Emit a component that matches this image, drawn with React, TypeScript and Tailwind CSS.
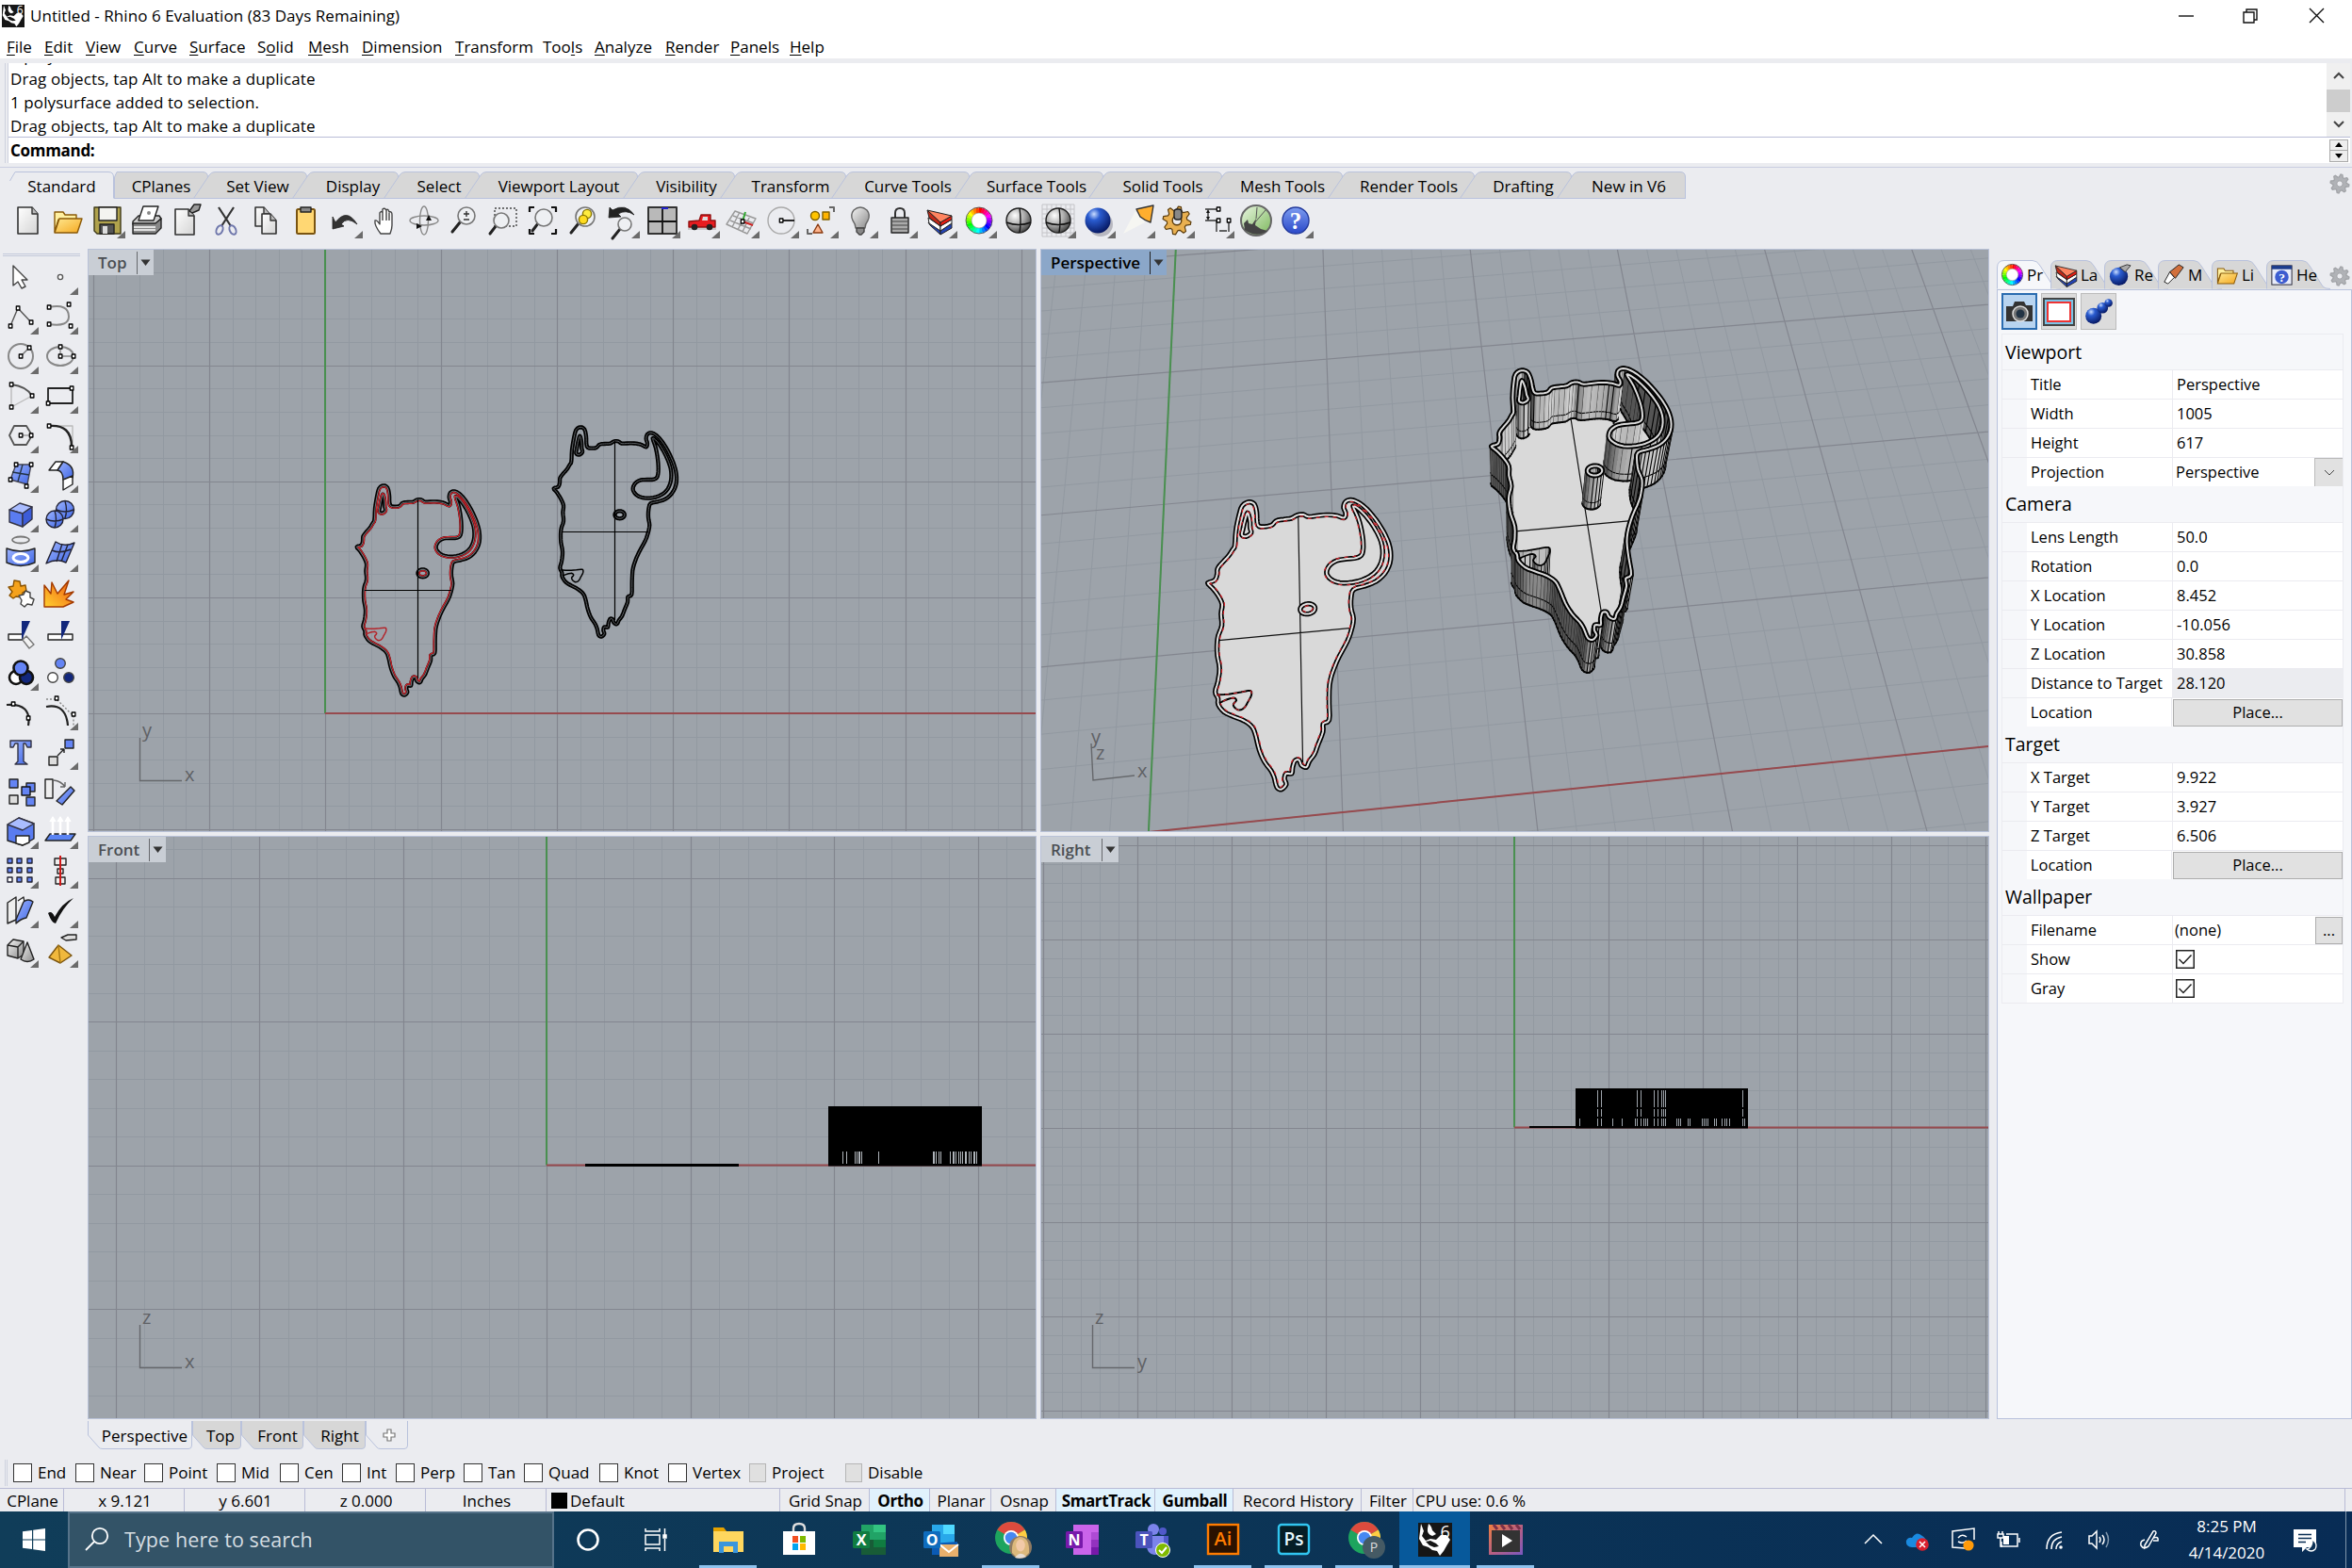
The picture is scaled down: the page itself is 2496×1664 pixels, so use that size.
import React from "react";

/* ------------------------------------------------------------------ */
/* Model geometry                                                      */
/* ------------------------------------------------------------------ */

type P2 = [number, number];
type P3 = [number, number, number];

const OUTLINE: P2[] = [
  [799, 182], [801, 145], [807, 108], [814, 82], [828, 73], [841, 80], [846, 102], [847, 125], [851, 138], [866, 140],
  [879, 138], [889, 128], [905, 126], [922, 125], [935, 118], [948, 118], [960, 125], [985, 124], [1005, 125], [1022, 129],
  [1037, 136], [1041, 125], [1037, 110], [1040, 97], [1049, 91], [1062, 94], [1080, 109], [1100, 137], [1117, 170], [1129, 202],
  [1134, 232], [1131, 260], [1119, 284], [1100, 301], [1075, 310], [1051, 316], [1045, 335], [1044, 360], [1048, 385], [1043, 410],
  [1034, 435], [1015, 470], [1002, 500], [994, 530], [992, 570], [991, 606], [979, 613], [978, 630], [968, 655], [960, 675],
  [950, 688], [944, 700], [934, 695], [930, 684], [922, 684], [917, 697], [915, 710], [904, 709], [901, 720], [904, 731],
  [895, 740], [886, 735], [881, 715], [875, 700], [862, 680], [852, 655], [845, 625], [838, 605], [822, 590], [800, 578],
  [782, 567], [770, 550], [769, 536], [763, 521], [768, 500], [771, 470], [766, 440], [765, 415], [767, 395], [774, 372],
  [772, 345], [774, 322], [765, 300], [752, 280], [743, 268], [757, 263], [762, 250], [763, 235], [772, 222], [785, 207], [794, 192],
];
const HORN: P2[] = [
  [1058, 108], [1068, 140], [1074, 175], [1076, 205], [1073, 230], [1062, 239], [1040, 240], [1018, 242], [1002, 252], [995, 268],
  [1000, 282], [1015, 294], [1040, 299], [1070, 295], [1095, 282], [1110, 262], [1117, 235], [1115, 205], [1105, 175], [1090, 145], [1073, 120],
];
const EAR: P2[] = [[826, 101], [831, 120], [832, 140], [834, 153], [823, 161], [814, 156], [816, 143], [820, 122]];
const MOUTH: P2[] = [[766, 528], [790, 529], [815, 527], [834, 526], [836, 536], [829, 550], [822, 562], [812, 566], [803, 560], [800, 552], [806, 544], [800, 538], [785, 541], [772, 546]];
const EYE: P2[] = Array.from({ length: 14 }, (_, i) => {
  const a = (i / 14) * Math.PI * 2;
  return [953 + 15.5 * Math.cos(a), 352 + 12 * Math.sin(a)] as P2;
});

function smooth(pts: P2[], n: number, closed = true): P2[] {
  const out: P2[] = [];
  const L = pts.length;
  const at = (i: number) => (closed ? pts[(i + L) % L] : pts[Math.max(0, Math.min(L - 1, i))]);
  for (let i = 0; i < (closed ? L : L - 1); i++) {
    const [a, b, c, d] = [at(i - 1), at(i), at(i + 1), at(i + 2)];
    for (let k = 0; k < n; k++) {
      const t = k / n;
      const f = (j: 0 | 1) =>
        0.5 * (2 * b[j] + (c[j] - a[j]) * t + (2 * a[j] - 5 * b[j] + 4 * c[j] - d[j]) * t * t + (3 * b[j] - a[j] - 3 * c[j] + d[j]) * t * t * t);
      out.push([f(0), f(1)]);
    }
  }
  if (!closed) out.push(pts[L - 1]);
  return out;
}

const UNIT = 24.62;
const toWorld = (p: P2): P2 => [(340 + p[0] / 3 - 345) / UNIT, (758 - (430 + p[1] / 3)) / UNIT];

function clockwise(pts: P2[]): P2[] {
  let a = 0;
  pts.forEach((p, i) => {
    const q = pts[(i + 1) % pts.length];
    a += p[0] * q[1] - q[0] * p[1];
  });
  return a > 0 ? [...pts].reverse() : pts;
}

function normals(pts: P2[]): P2[] {
  const L = pts.length;
  return pts.map((_, i) => {
    const a = pts[(i - 1 + L) % L];
    const b = pts[(i + 1) % L];
    const l = Math.hypot(b[0] - a[0], b[1] - a[1]) || 1;
    return [-(b[1] - a[1]) / l, (b[0] - a[0]) / l];
  });
}
const offset = (pts: P2[], d: number): P2[] => {
  const n = normals(pts);
  return pts.map((p, i) => [p[0] + n[i][0] * d, p[1] + n[i][1] * d]);
};

const ring = (pts: P2[], n = 3) => clockwise(smooth(pts, n).map(toWorld));
const OUT = ring(OUTLINE);
const HRN = ring(HORN);
const ERR = ring(EAR);
const EYR = ring(EYE, 2);
const MTH = smooth(MOUTH, 3, false).map(toWorld);
const RINGS = [OUT, HRN, ERR, EYR];
const HALF = 0.058;
const SHIFT: P2 = [-627 / 3 / UNIT, -186 / 3 / UNIT];
const shifted = (pts: P2[]): P2[] => pts.map((p) => [p[0] + SHIFT[0], p[1] + SHIFT[1]]);

const CAM: P3 = [8.452, -10.056, 30.858];
const project = (x: number, y: number, z: number): P3 => {
  const v = [x - CAM[0], y - CAM[1], z - CAM[2]];
  const r = v[0] * 0.99452 - v[1] * 0.10456;
  const u = v[0] * 0.09055 + v[1] * 0.86128 + v[2] * 0.5;
  const d = v[0] * 0.05228 + v[1] * 0.49727 - v[2] * 0.86603;
  return [502.5 + (1285.4 * r) / d, 308.5 - (1285.4 * u) / d, d];
};
const pt = (p: number[]) => p[0].toFixed(1) + " " + p[1].toFixed(1);
const path3 = (pts: P2[], z: number, close = true) => "M" + pts.map((p) => pt(project(p[0], p[1], z))).join("L") + (close ? "Z" : "");
const pathTop = (pts: P2[], close = true) => "M" + pts.map((p) => pt([251 + p[0] * UNIT, 492 - p[1] * UNIT])).join("L") + (close ? "Z" : "");

/* ------------------------------------------------------------------ */
/* Viewports                                                           */
/* ------------------------------------------------------------------ */

const MINOR = "#9299a1";
const MAJOR = "#83868f";
const RED = "#974a4e";
const GREEN = "#4a9050";

function Ortho({ ox, oy, step, children }: { ox: number; oy: number; step: number; children?: React.ReactNode }) {
  const minor: string[] = [];
  const major: string[] = [];
  for (let i = -60; i <= 60; i++) {
    const x = ox + i * step;
    const y = oy + i * step;
    const target = i % 5 === 0 ? major : minor;
    if (x >= 0 && x <= 1005) target.push(`M${Math.round(x) + 0.5} 0V617`);
    if (y >= 0 && y <= 617) target.push(`M0 ${Math.round(y) + 0.5}H1005`);
  }
  return (
    <svg className="block" width="1005" height="617" viewBox="0 0 1005 617">
      <path d={minor.join("")} stroke={MINOR} strokeWidth="1" />
      <path d={major.join("")} stroke={MAJOR} strokeWidth="1.2" />
      <path d={`M${ox} 0V${oy}`} stroke={GREEN} strokeWidth="2" />
      <path d={`M${ox} ${oy}H1005`} stroke={RED} strokeWidth="2" />
      {children}
    </svg>
  );
}

function Axes({ x, y, h, v }: { x: number; y: number; h: string; v: string }) {
  return (
    <g className="font-['Open_Sans',sans-serif]" fill="#5f6165" fontSize="20">
      <path d={`M${x + 0.5} ${y - 45}V${y + 0.5}H${x + 45}`} fill="none" stroke="#66686c" strokeWidth="1.4" />
      <text x={x + 3} y={y - 46}>{v}</text>
      <text x={x + 48} y={y + 1}>{h}</text>
    </g>
  );
}

function ViewLabel({ name, active, width }: { name: string; active?: boolean; width: number }) {
  return (
    <div className={`absolute left-0 top-0 flex h-[27px] items-center justify-between pl-[10px] text-[17px] ${active ? "bg-[#8ba7c9] text-black" : "bg-[#c9ced5] text-[#4b4e53]"}`} style={{ width }}>
      <span className="font-semibold leading-none">{name}</span>
      <div className="flex items-center">
        <span className={`h-[24px] w-px ${active ? "bg-[#222]" : "bg-[#66686c]"}`} />
        <svg className="mx-[3px]" width="11" height="10" viewBox="0 0 11 10">
          <path d="M0.5 1.5H10.5L5.5 8Z" fill="#333" />
        </svg>
      </div>
    </div>
  );
}

function TopView() {
  return (
    <Ortho ox={251} oy={492} step={UNIT}>
      {RINGS.map((r, i) => (
        <g key={i} fill="none" strokeLinejoin="round">
          <path d={pathTop(r)} stroke="#000" strokeWidth="4.3" />
          <path d={pathTop(r)} stroke="#5c6064" strokeWidth="1" />
        </g>
      ))}
      <path d={pathTop(MTH, false)} fill="none" stroke="#000" strokeWidth="1.5" />
      <path d="M558.5 203V393M502 299.5H594" stroke="#000" strokeWidth="1.2" />
      {RINGS.map((r, i) => (
        <g key={i} fill="none" strokeLinejoin="round">
          <path d={pathTop(shifted(r))} stroke="#000" strokeWidth="4.3" />
          <path d={pathTop(shifted(r))} stroke="#6b7074" strokeWidth="1.1" />
          <path d={pathTop(shifted(offset(r, i === 0 || i === 3 ? -HALF : HALF)))} stroke="#d5242c" strokeWidth="1.2" />
        </g>
      ))}
      <path d={pathTop(shifted(MTH), false)} fill="none" stroke="#b3262c" strokeWidth="1.5" />
      <path d="M349.5 265V455M293 361.5H385" stroke="#000" strokeWidth="1.2" />
      <Axes x={54} y={563} h="x" v="y" />
    </Ortho>
  );
}

function BlockView({ right }: { right?: boolean }) {
  if (right) {
    const tall = [23, 27, 65, 69, 83, 87, 91, 93, 95, 177];
    const low = [4, 39, 49, 63, 72, 74, 76, 107, 109, 111, 119, 121, 134, 136, 138, 140, 147, 149, 155, 158, 160, 163, 179];
    return (
      <Ortho ox={502} oy={308.5} step={20}>
        <path d="M518 308H570" stroke="#000" strokeWidth="2" />
        <rect x="567" y="267" width="183" height="42.5" fill="#000" />
        <g stroke="#9da3aa" strokeWidth="1">
          {tall.map((x) => <path key={x} d={`M${567.5 + x} 269V287M${567.5 + x} 289V297M${567.5 + x} 299V307`} />)}
          {low.map((x) => <path key={x} d={`M${567.5 + x} 299V307`} />)}
        </g>
        <Axes x={54} y={563} h="y" v="z" />
      </Ortho>
    );
  }
  const bars = [15, 19, 28, 30, 32, 33, 35, 53, 111, 112, 114, 117, 119, 129, 132, 133, 135, 138, 140, 142, 145, 146, 149, 151, 154, 155, 157];
  return (
    <Ortho ox={486} oy={348.5} step={30.5}>
      <path d="M527 348.5H690" stroke="#000" strokeWidth="3" />
      <rect x="785" y="286" width="163" height="63.5" fill="#000" />
      <g stroke="#aeb3b9" strokeWidth="1">
        {bars.map((x) => <path key={x} d={`M${785.5 + x} 334V347`} />)}
      </g>
      <Axes x={54} y={563} h="x" v="z" />
    </Ortho>
  );
}

type Quad = { d: number; pts: string; rib: string; mid: string; low: string; fill: string };

function wallQuads(pts: P2[], zb: number, sign: number, closed = true, twoSided = false): Quad[] {
  const res: Quad[] = [];
  const L = pts.length;
  for (let i = 0; i < (closed ? L : L - 1); i++) {
    const a = pts[i];
    const b = pts[(i + 1) % L];
    const l = Math.hypot(b[0] - a[0], b[1] - a[1]) || 1;
    let n: P2 = [(-(b[1] - a[1]) / l) * sign, ((b[0] - a[0]) / l) * sign];
    const facing = n[0] * (CAM[0] - a[0]) + n[1] * (CAM[1] - a[1]);
    if (facing <= 0) {
      if (!twoSided) continue;
      n = [-n[0], -n[1]];
    }
    const [a0, b0, a1, b1] = [project(a[0], a[1], zb), project(b[0], b[1], zb), project(a[0], a[1], 2), project(b[0], b[1], 2)];
    const am = project(a[0], a[1], 0.62);
    const bm = project(b[0], b[1], 0.62);
    const s = Math.round(85 + 140 * Math.max(0, n[0] * 0.55 - n[1] * 0.7));
    const outerSide = zb === 0;
    res.push({
      d: Math.hypot((a[0] + b[0]) / 2 - CAM[0], (a[1] + b[1]) / 2 - CAM[1]),
      pts: [a0, b0, b1, a1].map(pt).join(" "),
      rib: outerSide || i % 2 === 0 ? `M${pt(a0)}L${pt(a1)}` : "",
      mid: `M${pt(am)}L${pt(bm)}`,
      low: `M${pt(a0)}L${pt(b0)}`,
      fill: `rgb(${s},${s},${s})`,
    });
  }
  return res;
}

function PerspectiveView() {
  const minor: string[] = [];
  const major: string[] = [];
  for (let i = -25; i <= 50; i++) {
    (i % 5 === 0 ? major : minor).push(`M${pt(project(i, -5, 0))}L${pt(project(i, 35, 0))}`);
    if (i >= -5 && i <= 35) (i % 5 === 0 ? major : minor).push(`M${pt(project(-25, i, 0))}L${pt(project(50, i, 0))}`);
  }
  const quads: Quad[] = [];
  RINGS.forEach((r, i) => {
    quads.push(...wallQuads(offset(r, HALF), i === 0 ? 0 : 0.25, 1));
    quads.push(...wallQuads(offset(r, -HALF), 0.25, -1));
  });
  quads.push(...wallQuads(MTH, 0.25, 1, false, true));
  quads.sort((a, b) => b.d - a.d);
  const o = project(0, 0, 0);
  const seg = (x0: number, y0: number, x1: number, y1: number, z: number) => `M${pt(project(x0, y0, z))}L${pt(project(x1, y1, z))}`;
  const [cx, cy] = toWorld([937, 406]);
  const [, top] = toWorld([937, 120]);
  const [, bot] = toWorld([937, 692]);
  const [lx] = toWorld([768, 406]);
  const [rx] = toWorld([1044, 406]);
  return (
    <svg className="block" width="1005" height="617" viewBox="0 0 1005 617">
      <path d={minor.join("")} stroke={MINOR} strokeWidth="1" />
      <path d={major.join("")} stroke={MAJOR} strokeWidth="1.2" />
      <path d={`M${pt(o)}L${pt(project(0, 35, 0))}`} stroke={GREEN} strokeWidth="2" />
      <path d={`M${pt(o)}L${pt(project(50, 0, 0))}`} stroke={RED} strokeWidth="2" />

      <path d={path3(shifted(offset(OUT, HALF)), 0)} fill="#d9d9d9" />
      <path d={seg(cx + SHIFT[0], top + SHIFT[1], cx + SHIFT[0], bot + SHIFT[1], 0) + seg(lx + SHIFT[0], cy + SHIFT[1], rx + SHIFT[0], cy + SHIFT[1], 0)} stroke="#111" strokeWidth="1.2" />
      {RINGS.map((r, i) => (
        <g key={i} fill="none" strokeLinejoin="round">
          <path d={path3(shifted(r), 0)} stroke="#000" strokeWidth="5.4" />
          <path d={path3(shifted(r), 0)} stroke="#e4e4e4" strokeWidth="2" />
          <path d={path3(shifted(offset(r, i === 0 || i === 3 ? -HALF * 1.1 : HALF * 1.1)), 0)} stroke="#d5242c" strokeWidth="1.2" strokeDasharray="4 5" />
        </g>
      ))}
      <path d={path3(shifted(MTH), 0, false)} fill="none" stroke="#000" strokeWidth="2" />
      <path d={path3(shifted(MTH), 0, false)} fill="none" stroke="#d5242c" strokeWidth="1.1" strokeDasharray="4 5" />

      <path d={path3(OUT, 0.25)} fill="#d9d9d9" />
      <path d={seg(cx, top, cx, bot, 0.25) + seg(lx, cy, rx, cy, 0.25)} stroke="#111" strokeWidth="1.2" />
      {quads.map((q, i) => (
        <g key={i}>
          <polygon points={q.pts} fill={q.fill} stroke={q.fill} strokeWidth="0.6" />
          <path d={q.rib + q.mid} stroke="#000" strokeWidth="1.1" />
          <path d={q.low} stroke="#000" strokeWidth="2" strokeLinecap="round" />
        </g>
      ))}
      {RINGS.map((r, i) => (
        <g key={i} fill="none" strokeLinejoin="round">
          <path d={path3(r, 2)} stroke="#000" strokeWidth="5.8" />
          <path d={path3(r, 2)} stroke="#dcdcdc" strokeWidth="2" />
        </g>
      ))}
      <path d={path3(MTH, 2, false)} fill="none" stroke="#000" strokeWidth="1.8" />

      <g className="font-['Open_Sans',sans-serif]" fill="#5f6165" fontSize="20">
        <path d="M53 524L55 563L99 558" fill="none" stroke="#66686c" strokeWidth="1.4" />
        <text x="53" y="524">y</text>
        <text x="58" y="541">z</text>
        <text x="102" y="560">x</text>
      </g>
    </svg>
  );
}

function Viewport({ name, active, width, children }: { name: string; active?: boolean; width: number; children: React.ReactNode }) {
  return (
    <div className="relative h-[617px] w-[1005px] overflow-hidden bg-[#9da3aa] outline outline-[#b9c2d8]">
      {children}
      <ViewLabel name={name} active={active} width={width} />
    </div>
  );
}

/* ------------------------------------------------------------------ */
/* Tool icons: drawn around (0,0) in a 42 x 42 cell                    */
/* ------------------------------------------------------------------ */

const Node = ({ x, y }: { x: number; y: number }) => <rect x={x - 1.7} y={y - 2} width="3.6" height="4" fill="#fff" stroke="#000" strokeWidth="1.3" />;
const Flag = () => <path d="M19 11V19H10Z" fill="#6b6b6b" />;

function Cell({ flag, children }: { flag?: boolean; children?: React.ReactNode }) {
  return (
    <svg className="block shrink-0" width="42" height="42" viewBox="-21 -21 42 42" fill="none" stroke="#222" strokeWidth="1.4" strokeLinejoin="round">
      {children}
      {flag && <g stroke="none"><Flag /></g>}
    </svg>
  );
}

const Lens = ({ x = 4, y = -5, r = 8, d = 18 }: { x?: number; y?: number; r?: number; d?: number }) => (
  <g>
    <path d={`M${x - r * 0.7} ${y + r * 0.7}L${x - d} ${y + d + 2}`} stroke="#222" strokeWidth="3" strokeLinecap="round" />
    <circle cx={x} cy={y} r={r} fill="#eef0f3" stroke="#777" strokeWidth="1.6" />
  </g>
);
const Page = ({ x, y, w, h }: { x: number; y: number; w: number; h: number }) => (
  <g>
    <path d={`M${x} ${y}H${x + w - 6}L${x + w} ${y + 7}V${y + h}H${x}Z`} fill="url(#paper)" stroke="#333" strokeWidth="1.6" />
    <path d={`M${x + w - 6} ${y}V${y + 7}H${x + w}`} fill="#bbb" stroke="#333" />
  </g>
);
const Wheel = ({ r = 11, w = 6 }: { r?: number; w?: number }) => {
  const n = 24;
  return (
    <g>
      {Array.from({ length: n }, (_, i) => {
        const a = (i / n) * Math.PI * 2 - 1.6;
        const b = ((i + 1.15) / n) * Math.PI * 2 - 1.6;
        return <path key={i} d={`M${Math.cos(a) * r} ${Math.sin(a) * r}L${Math.cos(b) * r} ${Math.sin(b) * r}`} stroke={`hsl(${360 - (i / n) * 360} 100% 50%)`} strokeWidth={w} />;
      })}
      <circle r={r - w / 2} fill="#fff" stroke="#888" strokeWidth="0.6" />
      <circle r={r + w / 2} stroke="#444" strokeWidth="0.8" />
    </g>
  );
};
const Gear = ({ r, fill, stroke, hole }: { r: number; fill: string; stroke: string; hole: string }) => {
  const p = Array.from({ length: 32 }, (_, i) => {
    const a = (i / 32) * Math.PI * 2 + 0.1;
    const q = i % 4 < 2 ? r : r * 0.72;
    return `${(Math.cos(a) * q).toFixed(1)},${(Math.sin(a) * q).toFixed(1)}`;
  });
  return (
    <g>
      <polygon points={p.join(" ")} fill={fill} stroke={stroke} strokeWidth="1.2" />
      <circle r={r * 0.32} fill={hole} stroke={stroke} />
    </g>
  );
};
const Layers = () => (
  <g strokeWidth="1">
    <path d="M-12 2L1 11V15L-10 5Z" fill="#2444b4" />
    <path d="M1 11L13 3V8L1 15Z" fill="#2444b4" />
    <path d="M-12 -3L1 6V11L-11 3Z" fill="#fff" />
    <path d="M1 6L13 -1V3L1 11Z" fill="#fff" />
    <path d="M-13 -11L1 2V6L-11 -3Z" fill="#c22818" />
    <path d="M1 2L13 -5V-1L1 6Z" fill="#e81c10" />
    <path d="M-13 -11L13 -5L1 2Z" fill="#ff8460" />
  </g>
);
const Folder = ({ s = 1 }: { s?: number }) => (
  <g transform={`scale(${s})`} strokeWidth="1.4" stroke="#8a5a08">
    <path d="M-14 -9H-5L-3 -6H9V-1H-10L-14 12Z" fill="#fff0a0" />
    <path d="M-9 -2H15L10 13H-14Z" fill="url(#gold)" />
  </g>
);
const Ball = ({ r = 12 }: { r?: number }) => (
  <g strokeWidth="1.4">
    <circle r={r} fill="url(#steel)" stroke="#222" />
    <path d={`M${-r} 2Q0 7 ${r} 2M1 ${-r}Q3 0 1 ${r}`} stroke="#111" />
  </g>
);
const Help = ({ r = 14 }: { r?: number }) => (
  <g>
    <circle r={r} fill="url(#helpblue)" stroke="#233a9c" />
    <text y="9" textAnchor="middle" fontSize="25" fontWeight="700" fill="#fff" stroke="none" className="font-['Liberation_Serif',serif]">?</text>
  </g>
);

const TOOLBAR: { flag?: boolean; icon: React.ReactNode }[] = [
  { icon: <Page x={-11} y={-14} w={21} h={28} /> },
  { icon: <Folder /> },
  { flag: true, icon: <g><path d="M-14 -14H14V14H-11L-14 11Z" fill="#b0a24c" stroke="#3f3a18" /><rect x="-9" y="-14" width="19" height="14" fill="#f4f4f0" /><rect x="-8" y="4" width="15" height="10" fill="#555" /><rect x="-5" y="6" width="5" height="8" fill="#ddd" stroke="none" /></g> },
  { icon: <g><path d="M-15 1L-9 -5H13L15 -2L9 4H-15Z" fill="#ccc" /><path d="M-9 0L-4 -15H12L7 0Z" fill="#fff" /><circle cx="2" cy="-8" r="2" fill="#888" stroke="none" /><path d="M-15 3H9L15 -2V8L9 14H-15Z" fill="#888" /><path d="M-14 7H9M-14 10H9" stroke="#fff" strokeWidth="1.5" /></g> },
  { icon: <g><Page x={-12} y={-12} w={20} h={27} /><path d="M3 -10L8 -17H15L13 -11L6 -8Z" fill="#999" /></g> },
  { icon: <g strokeWidth="2"><path d="M-8 -14L5 6M8 -14L-5 6" stroke="#333" strokeWidth="2.2" /><ellipse cx="-7" cy="10" rx="3.2" ry="5" stroke="#7078ac" transform="rotate(25 -7 10)" /><ellipse cx="7" cy="10" rx="3.2" ry="5" stroke="#7078ac" transform="rotate(-25 7 10)" /></g> },
  { icon: <g><Page x={-11} y={-14} w={15} h={20} /><Page x={-4} y={-7} w={15} h={21} /></g> },
  { icon: <g><rect x="-9" y="-12" width="19" height="26" rx="1.5" fill="#ffd773" stroke="#7a5410" strokeWidth="2" /><path d="M-5 -14H6V-9H-5Z" fill="#888" /></g> },
  { flag: true, icon: <path d="M-10 2Q2 -14 13 4Q2 -5 -4 4L-1 6L-13 9L-13 -4Z" fill="#333" stroke="#222" strokeWidth="0.8" /> },
  { icon: <path d="M-4 14Q-11 5 -10 0Q-8 -1 -5 4V-8Q-3 -11 -2 -8V-12Q0 -14 2 -11V-11Q4 -13 5 -9Q8 -10 8 -6V5Q8 9 6 14Z M-2 -8V0M2 -11V0M5 -8V0" fill="#fff" stroke="#444" /> },
  { icon: <g stroke="#888"><ellipse rx="15" ry="5" /><ellipse rx="4.5" ry="15" /><path d="M5 -6L8 0H2ZM-8 3L-2 6L-8 9Z" fill="#111" stroke="none" /></g> },
  { icon: <g><Lens x={3} y={-5} r={9} d={15} /><path d="M0 -7H6M3 -10V-4M0 -1H6" stroke="#333" /></g> },
  { icon: <g><rect x="-9" y="-13" width="23" height="19" strokeDasharray="2 2" stroke="#444" /><Lens x={-2} y={0} r={8} d={12} /></g> },
  { icon: <g><Lens x={1} y={-3} r={9} d={12} /><path d="M-14 -9V-14H-9M9 -14H14V-9M14 9V14H9M-14 9V14H-9" stroke="#111" strokeWidth="2.2" /></g> },
  { icon: <g><Lens x={3} y={-4} r={10} d={15} /><circle cx="5" cy="-7" r="4.6" fill="#ffec40" stroke="#8a7600" /><circle cx="1" cy="-1" r="4.6" fill="#ffdc20" stroke="#8a7600" /></g> },
  { flag: true, icon: <g><Lens x={3} y={4} r={7} d={13} /><path d="M-10 -11Q4 -19 13 -6Q4 -12 -4 -7L-1 -4L-14 -3L-13 -14Z" fill="#222" strokeWidth="0.8" /></g> },
  { flag: true, icon: <g><rect x="-15" y="-14" width="30" height="28" fill="#b9b9b9" stroke="#333" strokeWidth="2" /><path d="M0 -14V14M-15 1H15" stroke="#111" strokeWidth="1.8" /><path d="M-1 -13H6" stroke="#22c" strokeWidth="2" /></g> },
  { flag: true, icon: <g><path d="M-15 9H15" stroke="#bbb" /><path d="M-14 1L-3 0L-1 -6H9V0H14V7H-14Z" fill="#e81c20" stroke="#901010" /><path d="M1 -4H6V0H0Z" fill="#ddd" stroke="none" /><circle cx="-8" cy="7" r="2.6" fill="#222" /><circle cx="8" cy="7" r="2.6" fill="#222" /></g> },
  { flag: true, icon: <g stroke="#999"><path d="M-7 -10L15 -2L6 14L-16 4ZM-2 -9L-10 7M4 -7L-4 10M9 -5L1 12M-9 -5L13 3M-12 0L10 9" /><path d="M1 1L4 -9" stroke="#3a3" strokeWidth="2" /><path d="M1 1L12 5" stroke="#c22" strokeWidth="2" /><Node x={1} y={1} /></g> },
  { flag: true, icon: <g><circle r="14" stroke="#aaa" /><path d="M0 0H14" stroke="#111" strokeWidth="1.8" /><Node x={0} y={0} /></g> },
  { flag: true, icon: <g><circle cx="-6" cy="-5" r="4.5" fill="#ffc400" stroke="#806000" /><rect x="2" y="-9" width="7" height="8" fill="#ffb400" stroke="#806000" /><path d="M-3 4L2 13H-8Z" fill="#ffb48c" stroke="#8a3a10" /><path d="M9 -14H14V-9M-14 9V14H-9" stroke="#666" strokeWidth="2" /></g> },
  { flag: true, icon: <g><path d="M-5 8Q-5 4 -8 0Q-11 -6 -7 -11Q0 -17 7 -11Q11 -6 8 0Q5 4 5 8Z" fill="url(#paper2)" stroke="#666" /><path d="M-4 8H4V12L1 15H-1L-4 12Z" fill="#888" stroke="#444" /></g> },
  { flag: true, icon: <g><path d="M-5 -2V-8Q-5 -13 0 -13Q5 -13 5 -8V-2" strokeWidth="2" stroke="#333" /><rect x="-9" y="-3" width="18" height="16" fill="#aaa" /><path d="M-8 1H8M-8 5H8M-8 9H8" stroke="#666" /></g> },
  { flag: true, icon: <Layers /> },
  { flag: true, icon: <Wheel /> },
  { icon: <Ball r={13} /> },
  { flag: true, icon: <g><path d="M-17 -17H17V17H-17ZM-17 -12H17M-17 -7H17M-17 -2H17M-17 3H17M-17 8H17M-17 13H17M-12 -17V17M-7 -17V17M-2 -17V17M3 -17V17M8 -17V17M13 -17V17" stroke="#c4c4c8" strokeWidth="1" /><Ball r={13} /></g> },
  { flag: true, icon: <g stroke="none"><circle cx="3" cy="4" r="13" fill="#b8b8c0" /><circle r="13.5" fill="url(#blueball)" /></g> },
  { flag: true, icon: <g><path d="M-15 14L-2 -10L8 2Z" fill="#f6f6f2" stroke="none" /><path d="M-1 -12L17 -16L14 2Q8 0 3 -4Z" fill="#ffae2e" stroke="#333" /></g> },
  { flag: true, icon: <g><Gear r={15} fill="#e9b050" stroke="#5b3c0c" hole="#ebecf0" /><rect x="-3" y="-12" width="8" height="11" rx="3" fill="#888" /></g> },
  { flag: true, icon: <g><path d="M-12 -12H0M-12 0H0V12M13 0V12M-9 -9V-3M3 11H11" stroke="#333" /><path d="M-11 -8L-9 -12L-7 -8ZM-11 -4L-9 0L-7 -4Z" fill="#111" stroke="none" /><Node x={2} y={-12} /><Node x={2} y={0} /><Node x={13} y={0} /></g> },
  { icon: <g><circle r="16" fill="url(#green)" stroke="#666" strokeWidth="2" /><path d="M-12 10L-13 3L-9 -1L-8 3L-4 4L0 -2L-1 5L5 9L12 11Q0 19 -12 10Z" fill="#444" stroke="none" /><path d="M-2 3L10 -11M0 -2L1 -14" stroke="#555" strokeWidth="1" /></g> },
  { flag: true, icon: <Help /> },
];

const BL = "url(#blue)";
const SIDE: [React.ReactNode, boolean][] = [
  [<path d="M-8 -12V9L-3 5L1 12L5 10L1 3H7Z" fill="#fff" stroke="#444" />, false],
  [<circle r="2.6" fill="#fff" stroke="#555" />, true],
  [<g><path d="M-11 10L-3 -9L11 6" stroke="#555" /><Node x={-11} y={10} /><Node x={-3} y={-9} /><Node x={11} y={6} /></g>, true],
  [<g><path d="M-12 -10Q9 -14 9 0Q9 11 -12 8" stroke="#888" strokeWidth="2" /><Node x={-12} y={-10} /><Node x={9} y={-13} /><Node x={-12} y={8} /><Node x={11} y={10} /></g>, true],
  [<g><circle r="13" stroke="#888" strokeWidth="2" /><path d="M0 0L9 -9" stroke="#777" /><Node x={0} y={0} /><Node x={9} y={-9} /></g>, true],
  [<g><ellipse rx="14" ry="10" stroke="#888" strokeWidth="2" /><path d="M0 -10V0H14" stroke="#888" /><Node x={0} y={-10} /><Node x={0} y={0} /><Node x={14} y={0} /></g>, true],
  [<g><path d="M-10 12V-12" stroke="#bbb" /><path d="M-10 12L12 0" stroke="#bbb" /><path d="M-10 -12Q6 -10 12 0" stroke="#555" strokeWidth="1.8" /><Node x={-10} y={-12} /><Node x={12} y={0} /><Node x={-10} y={12} /></g>, true],
  [<g><rect x="-13" y="-8" width="26" height="16" strokeWidth="1.8" /><Node x={12} y={-8} /><Node x={-13} y={8} /></g>, true],
  [<g><path d="M-12 0L-7 -10H6L12 0L6 10H-7Z" stroke="#555" strokeWidth="1.8" /><path d="M0 0H11" stroke="#999" /><Node x={0} y={0} /><Node x={11} y={0} /></g>, true],
  [<g><path d="M-12 -10H13V13" stroke="#bbb" /><path d="M-12 -10Q12 -12 12 12" strokeWidth="2.4" stroke="#222" /><Node x={-12} y={-10} /><Node x={12} y={13} /></g>, true],
  [<g><path d="M-5 -11L11 -11L7 10L-11 5Z" fill={BL} stroke="#445" /><path d="M2 -11L-3 7M-9 -3L9 0" stroke="#234" /><Node x={-5} y={-11} /><Node x={11} y={-11} /><Node x={6} y={12} /><Node x={-11} y={5} /></g>, true],
  [<g><path d="M-12 -5L-5 -14H3L-3 -5Z" fill="#fff" /><path d="M-3 -5L3 -14Q16 -10 13 3L3 5Q3 -4 -3 -5Z" fill={BL} /><path d="M3 5L13 1V10L3 16Z" fill="#fff" /></g>, true],
  [<g stroke="#334"><path d="M-12 -5L-1 -12L12 -8L2 -1Z" fill="#a9bcff" /><path d="M-12 -5L2 -1V13L-12 8Z" fill="#5a7cf0" /><path d="M2 -1L12 -8V5L2 13Z" fill="#3c5cd8" /></g>, true],
  [<g stroke="#223"><circle cx="5" cy="-5" r="9.5" fill={BL} /><circle cx="-6" cy="5" r="9" fill={BL} /><path d="M-15 5Q-6 9 3 5M-6 -4Q-3 5 -6 14M-4 -5Q5 -1 14 -5M5 -14Q8 -5 5 4" /></g>, true],
  [<g><ellipse cy="-15" rx="9" ry="3.5" stroke="#777" strokeWidth="1.8" /><path d="M-15 -6Q0 0 15 -6V9Q0 16 -15 9Z" fill={BL} /><ellipse cy="4" rx="8" ry="4.5" stroke="#fff" strokeWidth="3" /></g>, true],
  [<g stroke="#223"><path d="M-5 -13Q4 -7 15 -12L6 9Q-4 4 -15 10Z" fill={BL} /><path d="M2 -11L-4 8M-9 -4Q0 0 11 -5M8 -10L1 8" /></g>, true],
  [<g><path d="M-13 -7L-8 -8L-7 -14L-1 -13L0 -8L5 -9L6 -3L2 -1L1 4L-5 3L-8 5L-12 2L-9 -2Z" fill="#f5a21c" stroke="#8a5200" /><path d="M-2 2L3 1L5 -3L10 -1L10 4L14 6L12 12L7 11L4 14L0 11L1 7Z" fill="#fff" stroke="#444" /></g>, false],
  [<path d="M-17 14V-9L-10 0L-9 -12L-3 0L9 -14L4 1L14 -2L6 6L14 9L3 14Z" fill="url(#fire)" stroke="#a33a00" />, false],
  [<g><path d="M-13 1H2V7H-13Z" fill="#fff" /><path d="M2 7L6 3L14 12L9 16Z" fill="#f2f2f2" stroke="#777" /><path d="M1 -13H10L1 7Z" fill="#12277c" stroke="none" /></g>, false],
  [<g><path d="M-13 1H13V7H-13Z" fill="#fff" /><path d="M1 -13H10L1 7Z" fill="#12277c" stroke="none" /></g>, false],
  [<g strokeWidth="2.6" stroke="#111"><circle cx="-5" cy="5" r="7" fill="#fff" /><circle cx="6" cy="5" r="7" fill="#12277c" /><circle cy="-5" r="7.5" fill="#6484f4" /></g>, true],
  [<g stroke="#444"><circle cy="-10" r="5.3" fill="#6484f4" /><circle cx="-8" cy="5" r="5.3" fill="#fff" /><circle cx="9" cy="5" r="5.3" fill="#12277c" /></g>, false],
  [<g><path d="M-15 -8Q12 -10 8 14" strokeWidth="2.2" stroke="#222" /><Node x={-8} y={-9} /><Node x={8} y={6} /></g>, false],
  [<g><path d="M-15 -14H-4L14 4V14" stroke="#888" strokeDasharray="2 2" /><path d="M-15 -6Q6 -10 8 14" strokeWidth="2.2" stroke="#222" /><Node x={-4} y={-15} /><Node x={14} y={2} /></g>, true],
  [<path d="M-11 -12H11V-5H7L5 -9H3V10L7 13H-6L-3 10V-9H-6L-8 -5H-11Z" fill={BL} stroke="#334" />, false],
  [<g><rect x="-12" y="5" width="9" height="9" fill="#ddd" /><rect x="5" y="-13" width="9" height="9" fill="#6484f4" /><path d="M-3 4L4 -3M4 -3H0M4 -3V1" /></g>, true],
  [<g><rect x="-12" y="-13" width="9" height="9" fill="#6484f4" /><rect x="-12" y="4" width="9" height="9" fill="#ddd" /><rect x="6" y="-9" width="9" height="9" fill="#6484f4" /><rect x="1" y="-5" width="9" height="9" fill="#6484f4" stroke="#111" /><rect x="6" y="6" width="9" height="9" fill="#6484f4" /></g>, false],
  [<g><rect x="-16" y="-13" width="8" height="20" fill="#eee" /><path d="M-7 -12Q1 -11 5 -5M5 -5V-10M5 -5H0" stroke="#666" /><path d="M-4 10L11 -5L15 -1L2 14Z" fill={BL} /></g>, false],
  [<g><path d="M-14 -7L-2 -14L14 -8V8L2 15L-14 10Z" fill="#5a7cf0" /><path d="M-14 -7L-2 -14L14 -8L2 -1Z" fill="#a9bcff" stroke="#334" /><path d="M-5 5H9V12L2 15L-5 13Z" fill="#fff" /></g>, true],
  [<g><path d="M-16 10L-11 3H16L11 10Z" fill="#5a84f4" /><path d="M-8 4V-12M0 4V-12M8 4V-12" stroke="#fff" strokeWidth="2.6" /><path d="M-11 -10L-8 -15L-5 -10M-3 -10L0 -15L3 -10M5 -10L8 -15L11 -10" fill="#fff" stroke="#fff" /></g>, true],
  [<g fill="#6484f4" stroke="#223"><path d="M-14 -13H-9V-8H-14ZM-4 -13H1V-8H-4ZM7 -13H12V-8H7ZM-14 -3H-9V2H-14ZM-4 -3H1V2H-4ZM7 -3H12V2H7ZM-4 7H1V12H-4ZM7 7H12V12H7Z" /><path d="M-14 7H-9V12H-14Z" fill="#fff" /></g>, true],
  [<g><rect x="-6" y="-13" width="12" height="7" fill="#eee" /><rect x="-3" y="-2" width="6" height="5" fill="#eee" /><rect x="-5" y="7" width="10" height="7" fill="#eee" /><path d="M0 -16V16" stroke="#d01818" strokeWidth="2" /></g>, true],
  [<g><path d="M-14 -8L-5 -14V10L-14 14Z" fill="#eee" /><path d="M-3 -10L3 -14L4 -8" fill="#fff" /><path d="M-5 10L3 -9Q8 -13 13 -9L6 8Q0 9 -5 14Z" fill={BL} /></g>, true],
  [<path d="M-13 3Q-9 0 -6 7Q2 -8 14 -13Q2 -2 -5 14Q-9 14 -13 3Z" fill="#111" stroke="none" />, true],
  [<g><path d="M-14 -5L-8 -11L3 -9V5L-3 9L-14 6Z" fill="url(#paper2)" /><path d="M-14 -5L-3 -3L3 -9M-3 -3V9" /><path d="M7 -8L14 10Q7 15 0 10Z" fill="url(#paper2)" /></g>, true],
  [<g><path d="M-12 8L-2 -5L12 6L0 14Z" fill="#f0b83c" stroke="#7a5410" /><path d="M-2 -5L0 14" stroke="#a67814" /><path d="M1 -13L8 -16H17V-11L6 -10Z" fill="#ddd" /></g>, true],
];

const GradientDefs = () => (
  <svg className="absolute h-0 w-0">
    <defs>
      <linearGradient id="paper" x1="0" y1="0" x2="1" y2="1"><stop offset="0" stopColor="#fff" /><stop offset="1" stopColor="#d4d4d4" /></linearGradient>
      <linearGradient id="paper2" x1="0" y1="0" x2="1" y2="1"><stop offset="0" stopColor="#f4f4f4" /><stop offset="1" stopColor="#8a8a8a" /></linearGradient>
      <linearGradient id="gold" x1="0" y1="0" x2="1" y2="1"><stop offset="0" stopColor="#ffe890" /><stop offset="1" stopColor="#f4a820" /></linearGradient>
      <linearGradient id="blue" x1="0" y1="0" x2="1" y2="1"><stop offset="0" stopColor="#9db4ff" /><stop offset="1" stopColor="#3f66e4" /></linearGradient>
      <linearGradient id="fire" x1="0" y1="1" x2="1" y2="0"><stop offset="0" stopColor="#ffd030" /><stop offset="1" stopColor="#f05a10" /></linearGradient>
      <linearGradient id="helpblue" x1="0" y1="0" x2="0" y2="1"><stop offset="0" stopColor="#7c9cf0" /><stop offset="1" stopColor="#2a48c8" /></linearGradient>
      <linearGradient id="green" x1="0" y1="0" x2="1" y2="1"><stop offset="0" stopColor="#eaf6e2" /><stop offset="1" stopColor="#7cb85c" /></linearGradient>
      <radialGradient id="steel" cx="0.35" cy="0.3" r="0.8"><stop offset="0" stopColor="#fff" /><stop offset="0.5" stopColor="#a8a8a8" /><stop offset="1" stopColor="#333" /></radialGradient>
      <radialGradient id="blueball" cx="0.35" cy="0.25" r="0.8"><stop offset="0" stopColor="#c8dcff" /><stop offset="0.3" stopColor="#2a5cd0" /><stop offset="1" stopColor="#04145c" /></radialGradient>
      <linearGradient id="film" x1="0" y1="0" x2="1" y2="1"><stop offset="0" stopColor="#f08040" /><stop offset="0.5" stopColor="#b86080" /><stop offset="1" stopColor="#7a58c0" /></linearGradient>
    </defs>
  </svg>
);

/* ------------------------------------------------------------------ */
/* Window chrome                                                       */
/* ------------------------------------------------------------------ */

const Rhino = ({ w, h }: { w: number; h: number }) => (
  <svg width={w} height={h} viewBox="0 0 36 36" preserveAspectRatio="none">
    <rect width="36" height="36" fill="#161616" />
    <path d="M3 1L6 9L4 14L8 19L13 17L19 18L24 13L30 13L34 18L31 23L27 30L23 35L20 30L15 29L11 26L5 24L1 17L2 9Z" fill="#fff" />
    <path d="M11 1Q14 3 15 8L19 12L15 14Q9 12 10 6Z" fill="#fff" />
    <path d="M8 20L13 19L19 22L22 25L17 26L12 24Z" fill="#161616" />
    <path d="M6 9L10 15L13 16L8 17L5 14Z" fill="#161616" />
    <text x="23.5" y="15.5" fontSize="18" fill="#fff" className="font-['Open_Sans',sans-serif]">6</text>
  </svg>
);

function TitleBar() {
  return (
    <div className="flex h-[34px] shrink-0 items-center bg-white pl-[2px]">
      <Rhino w={24} h={24} />
      <span className="ml-[6px] text-[17px] tracking-[0.05px]">Untitled - Rhino 6 Evaluation (83 Days Remaining)</span>
      <svg className="ml-auto mr-[28px]" width="156" height="20" viewBox="0 0 156 20" fill="none" stroke="#111" strokeWidth="1.4">
        <path d="M0 10H16" />
        <path d="M69 6H80V17H69ZM72 6V3H83V14H80" />
        <path d="M139 2L154 17M154 2L139 17" />
      </svg>
    </div>
  );
}

const MENU: [string, number][] = [["File", 0], ["Edit", 0], ["View", 0], ["Curve", 0], ["Surface", 0], ["Solid", 1], ["Mesh", 0], ["Dimension", 0], ["Transform", 0], ["Tools", 3], ["Analyze", 0], ["Render", 0], ["Panels", 0], ["Help", 0]];
const MENU_W = ["w-[40px]", "w-[44px]", "w-[51px]", "w-[59px]", "w-[72px]", "w-[54px]", "w-[57px]", "w-[99px]", "w-[93px]", "w-[55px]", "w-[75px]", "w-[69px]", "w-[63px]", "w-[60px]"];

function MenuBar() {
  return (
    <div className="flex h-[28px] shrink-0 items-start bg-white pl-[7px] text-[17px] leading-[31px]">
      {MENU.map(([m, k], i) => (
        <span key={m} className={`shrink-0 whitespace-nowrap ${MENU_W[i]}`}>
          {m.slice(0, k)}
          <span className="underline underline-offset-2">{m[k]}</span>
          {m.slice(k + 1)}
        </span>
      ))}
    </div>
  );
}

function CommandArea() {
  return (
    <div className="flex h-[116px] shrink-0 border-b border-[#c9cde0] pb-[4px] pl-[5px] pr-[2px] pt-[5px]">
      <div className="w-[4px] border-x border-[#cdd1de]" />
      <div className="flex grow flex-col bg-white text-[17px]">
        <div className="flex h-[79px] justify-between border-b border-[#b9bcd6]">
          <div className="-mb-px flex flex-col justify-end overflow-hidden pl-[2px] leading-[25px] tracking-[0.1px]">
            <div>1 polysurface added to selection.</div>
            <div>Drag objects, tap Alt to make a duplicate</div>
            <div>1 polysurface added to selection.</div>
            <div>Drag objects, tap Alt to make a duplicate</div>
          </div>
          <div className="flex w-[25px] flex-col items-center justify-between bg-[#f0f0f0] py-[9px]">
            <svg width="12" height="8" viewBox="0 0 12 8" fill="none" stroke="#444" strokeWidth="2"><path d="M1 7L6 2L11 7" /></svg>
            <div className="mt-[1px] h-[24px] w-full bg-[#cdcdcd]" />
            <svg width="12" height="8" viewBox="0 0 12 8" fill="none" stroke="#444" strokeWidth="2"><path d="M1 1L6 6L11 1" /></svg>
          </div>
        </div>
        <div className="flex grow items-center justify-between pl-[2px] pr-[2px] font-bold">
          <span className="tracking-[-0.3px]">Command:</span>
          <div className="flex h-[24px] w-[20px] flex-col border border-[#aaa] bg-[#eee]">
            <div className="flex h-1/2 items-center justify-center border-b border-[#aaa]"><svg width="8" height="5" viewBox="0 0 8 5"><path d="M0 5L4 0L8 5Z" /></svg></div>
            <div className="flex h-1/2 items-center justify-center"><svg width="8" height="5" viewBox="0 0 8 5"><path d="M0 0L4 5L8 0Z" /></svg></div>
          </div>
        </div>
      </div>
    </div>
  );
}

const TABS: [string, number][] = [
  ["Standard", 111], ["CPlanes", 100], ["Set View", 105], ["Display", 97], ["Select", 86], ["Viewport Layout", 168], ["Visibility", 103], ["Transform", 118],
  ["Curve Tools", 131], ["Surface Tools", 142], ["Solid Tools", 126], ["Mesh Tools", 128], ["Render Tools", 140], ["Drafting", 103], ["New in V6", 121],
];

function ToolTabs() {
  return (
    <div className="flex h-[33px] shrink-0 items-end justify-between pl-[10px] pr-[2px] text-[17px]">
      <div className="flex h-[29px]">
        {TABS.map(([name, w], i) => (
          <div key={name} className={`relative flex h-[29px] shrink-0 items-center justify-center pt-px ${i === 0 ? "z-10" : ""}`} style={{ width: w }}>
            <svg className={`absolute top-0 ${i > 1 ? "-left-[16px]" : "left-0"}`} width={i > 1 ? w + 16 : w} height="29" fill={i === 0 ? "#ebecf0" : "#d7d7d7"} stroke="#b9c2dc">
              <path d={i > 1 ? `M0.5 28.5L17 4Q19 0.5 23 0.5H${w + 10}Q${w + 15.5} 0.5 ${w + 15.5} 6V28.5` : i === 0 ? `M0.5 10L6 0.5H${w - 6}Q${w - 0.5} 0.5 ${w - 0.5} 6V28.5` : `M0.5 28.5V6L3 0.5H${w - 6}Q${w - 0.5} 0.5 ${w - 0.5} 6V28.5`} />
              {i > 0 && <path d={`M0 28.5H${w + 16}`} />}
            </svg>
            <span className="relative whitespace-nowrap leading-none">{name}</span>
          </div>
        ))}
      </div>
      <svg className="mb-[5px]" width="22" height="22" viewBox="-11 -11 22 22"><Gear r={10} fill="#b0b2b6" stroke="#a0a2a6" hole="#ebecf0" /></svg>
    </div>
  );
}

/* ------------------------------------------------------------------ */
/* Properties panel                                                    */
/* ------------------------------------------------------------------ */

const BluePair = () => (
  <g stroke="none"><circle cx="-5" cy="4" r="8" fill="url(#blueball)" /><circle cx="4" cy="-4" r="5.5" fill="url(#blueball)" /><circle cx="10" cy="-9" r="4" fill="url(#blueball)" /></g>
);
const PANEL_TABS: [string, React.ReactNode][] = [
  ["Pr", <Wheel r={9} w={5} />],
  ["La", <g transform="scale(0.9)"><Layers /></g>],
  ["Re", <g stroke="none"><circle cx="-1" cy="2" r="10" fill="url(#blueball)" /><path d="M0 -8L8 -11L12 -10L6 -3Z" fill="#aaa" stroke="#333" /></g>],
  ["M", <g><path d="M-10 8L-4 -3L1 3L-6 10Z" fill="#fff" /><path d="M-4 -3L6 -11L11 -8L2 4Z" fill="#d2703c" /></g>],
  ["Li", <Folder s={0.75} />],
  ["He", <g><rect x="-11" y="-10" width="22" height="21" fill="#e8ecfa" stroke="#223" /><rect x="-11" y="-10" width="22" height="4" fill="#1c3c8c" stroke="none" /><circle cy="2.5" r="7.5" fill="#3c5cd0" stroke="none" /><text y="7.5" textAnchor="middle" fontSize="14" fontWeight="700" fill="#fff" stroke="none" className="font-['Liberation_Serif',serif]">?</text></g>],
];

function PanelTabs() {
  return (
    <div className="flex h-[31px] shrink-0">
      {PANEL_TABS.map(([t, icon], i) => (
        <div key={t} className={`relative flex shrink-0 items-center pl-[3px] text-[17px] ${i === 5 ? "w-[75px]" : i === 4 ? "w-[58px]" : "w-[57px]"}`}>
          <svg className="absolute left-0 top-0" width="76" height="31" viewBox="0 0 76 31" fill={i === 0 ? "#f6f7fa" : "#d7d7d7"} stroke="#b9c2dc">
            <path d="M0.5 30.5V8Q0.5 0.5 8 0.5H38Q43 0.5 46 6L60 28Q62 30.5 68 30.5" />
          </svg>
          <svg className="relative" width="27" height="27" viewBox="-14 -14 28 28" fill="none" stroke="#222" strokeWidth="1">{icon}</svg>
          <span className="relative ml-[2px] leading-none">{t}</span>
        </div>
      ))}
    </div>
  );
}

type Row = [string, React.ReactNode, boolean?];
const Place = () => <div className="flex h-[29px] w-[180px] items-center justify-center border border-[#adadad] bg-[#e1e1e1]">Place...</div>;
const Text = ({ children }: { children: React.ReactNode }) => <span className="pl-[3px]">{children}</span>;
const Check = () => (
  <svg className="ml-[2px]" width="20" height="20" viewBox="0 0 20 20" fill="#fff" stroke="#222" strokeWidth="1.5"><rect x="0.75" y="0.75" width="18.5" height="18.5" /><path d="M3.5 10L8 14.5L16.5 5.5" fill="none" /></svg>
);
const SECTIONS: [string, Row[]][] = [
  ["Viewport", [
    ["Title", <Text>Perspective</Text>], ["Width", <Text>1005</Text>], ["Height", <Text>617</Text>],
    ["Projection", <div className="flex grow items-center justify-between"><span className="pl-[2px]">Perspective</span><span className="flex h-[30px] w-[30px] items-center justify-center border-l border-t border-[#bbb] bg-[#e1e1e1]"><svg width="12" height="8" viewBox="0 0 12 8" fill="none" stroke="#444"><path d="M1 1L6 6L11 1" /></svg></span></div>],
  ]],
  ["Camera", [
    ["Lens Length", <Text>50.0</Text>], ["Rotation", <Text>0.0</Text>], ["X Location", <Text>8.452</Text>], ["Y Location", <Text>-10.056</Text>],
    ["Z Location", <Text>30.858</Text>], ["Distance to Target", <Text>28.120</Text>, true], ["Location", <Place />],
  ]],
  ["Target", [["X Target", <Text>9.922</Text>], ["Y Target", <Text>3.927</Text>], ["Z Target", <Text>6.506</Text>], ["Location", <Place />]]],
  ["Wallpaper", [
    ["Filename", <div className="flex grow items-center justify-between"><span className="pl-[1px]">(none)</span><span className="flex h-[29px] w-[29px] items-center justify-center border border-[#adadad] bg-[#e1e1e1]">...</span></div>],
    ["Show", <Check />], ["Gray", <Check />],
  ]],
];

function PropertiesPanel() {
  return (
    <div className="mt-[17px] flex w-[377px] shrink-0 flex-col">
      <div className="relative">
        <PanelTabs />
        <svg className="absolute right-[2px] top-[6px]" width="22" height="22" viewBox="-11 -11 22 22"><Gear r={10} fill="#b0b2b6" stroke="#a0a2a6" hole="#ebecf0" /></svg>
      </div>
      <div className="flex h-[1230px] flex-col border border-[#b9c2dc] bg-[#f6f7fa] pl-[4px] pt-[3px]">
        <div className="flex gap-[4px]">
          <div className="flex h-[39px] w-[38px] items-center justify-center border-2 border-[#2a6cb0] bg-[#b8d4f0]">
            <svg width="32" height="30" viewBox="-16 -15 32 30"><path d="M-14 -6H-7L-5 -11H5L7 -7H14V10H-14Z" fill="#333" /><circle cx="1" cy="2" r="8" fill="#777" stroke="#ddd" strokeWidth="1.5" /><circle cx="1" cy="2" r="4.5" fill="#234" /></svg>
          </div>
          <div className="flex h-[39px] w-[38px] items-center justify-center border border-[#bbb] bg-[#dcdcdc]">
            <svg width="34" height="34" viewBox="-17 -17 34 34" fill="none"><rect x="-16" y="-14" width="32" height="28" fill="#7cc4e8" stroke="#444" strokeWidth="2" /><rect x="-12" y="-10" width="24" height="20" fill="#fff" stroke="#e33" strokeWidth="2" /></svg>
          </div>
          <div className="flex h-[39px] w-[38px] items-center justify-center border border-[#bbb] bg-[#dcdcdc]">
            <svg width="34" height="34" viewBox="-16 -16 32 32"><BluePair /></svg>
          </div>
        </div>
        <div className="mt-[4px] flex w-[363px] flex-col border-l border-r border-t border-[#ebebf0]">
          {SECTIONS.map(([title, rows], s) => (
            <div key={title} className="flex flex-col">
              <div className={`flex items-center pl-[3px] text-[19.5px] leading-none ${s === 0 ? "h-[37px]" : "h-[38px]"}`}>{title}</div>
              {rows.map(([label, value, dim], i) => (
                <div key={i} className="flex h-[31px] text-[16.5px]">
                  <div className="w-[26px] border-t border-[#ebebf0]" />
                  <div className="flex w-[155px] items-center whitespace-nowrap border-r border-t border-[#ebebf0] bg-white pl-[4px] leading-none">{label}</div>
                  <div className={`flex grow items-center border-t border-[#ebebf0] pl-[1px] leading-none ${dim ? "bg-[#ebecf0]" : "bg-white"}`}>{value}</div>
                </div>
              ))}
            </div>
          ))}
          <div className="h-px bg-[#ebebf0]" />
        </div>
      </div>
    </div>
  );
}

/* ------------------------------------------------------------------ */
/* Bottom bars                                                         */
/* ------------------------------------------------------------------ */

const VIEW_TABS: [string, number, number][] = [["Perspective", 111, 10], ["Top", 52, 8], ["Front", 66, 11], ["Right", 66, 11]];

function ViewTabs() {
  return (
    <div className="flex h-[33px] shrink-0 items-start pl-[93px] pt-[2px] text-[17px]">
      {[...VIEW_TABS, ["+", 45, 5] as [string, number, number]].map(([t, w, pad], i) => (
        <div key={t} className="relative flex h-[30px] items-center justify-center" style={{ width: w, paddingLeft: pad }}>
          <svg className="absolute left-0 top-0" width={w} height="30" fill={i > 0 && i < 4 ? "#d7d7d7" : "#ebecf0"} stroke="#b9c2dc">
            <path d={`M0.5 0V15L12 28Q13 29.5 16 29.5H${w - 4}Q${w - 0.5} 29.5 ${w - 0.5} 26V0`} />
          </svg>
          {t === "+" ? (
            <svg className="relative" width="14" height="14" viewBox="0 0 14 14" fill="#fff" stroke="#777" strokeWidth="1.2"><path d="M5 1H9V5H13V9H9V13H5V9H1V5H5Z" /></svg>
          ) : (
            <span className="relative whitespace-nowrap leading-none">{t}</span>
          )}
        </div>
      ))}
    </div>
  );
}

const SNAPS: [string, number][] = [["End", 66], ["Near", 73], ["Point", 77], ["Mid", 67], ["Cen", 66], ["Int", 57], ["Perp", 72], ["Tan", 64], ["Quad", 80], ["Knot", 73], ["Vertex", 86], ["Project", 102], ["Disable", 100]];

function SnapBar() {
  return (
    <div className="flex h-[40px] shrink-0 items-center pl-[5px] pt-[7px] text-[17px]">
      <div className="mr-[6px] h-[28px] w-[3px] border-x border-[#cdd1de]" />
      {SNAPS.map(([t, w], i) => (
        <div key={t} className="flex shrink-0 items-center gap-[6px]" style={{ width: w }}>
          <div className={`h-[20px] shrink-0 border-[1.5px] ${i > 10 ? "w-[18px] border-[#b5b5b5] bg-[#e0e0e0]" : "w-[20px] border-[#333] bg-white"}`} />
          <span className="leading-none">{t}</span>
        </div>
      ))}
    </div>
  );
}

const STATUS: [string, number][] = [["CPlane", 68], ["x 9.121", 128], ["y 6.601", 128], ["z 0.000", 128], ["Inches", 128], ["Default", 248], ["Grid Snap", 95], ["Ortho", 64], ["Planar", 65], ["Osnap", 69], ["SmartTrack", 105], ["Gumball", 83], ["Record History", 136], ["Filter", 55], ["CPU use: 0.6 %", 989]];

function StatusBar() {
  return (
    <div className="flex h-[25px] shrink-0 border-t border-[#b9bcd6] text-[17px]">
      {STATUS.map(([t, w], i) => {
        const on = t === "Ortho" || t === "SmartTrack" || t === "Gumball";
        const left = t === "Default" || i === 14;
        return (
          <div key={t} className={`flex shrink-0 items-center whitespace-nowrap border-r border-[#b9bcd6] pt-px leading-none ${left ? "pl-[2px]" : "justify-center pl-[2px]"} ${on ? "bg-[#e0f2fd] font-bold tracking-[-0.4px]" : ""}`} style={{ width: w }}>
            {t === "Default" && <span className="ml-[3px] mr-[3px] h-[17px] w-[17px] bg-black" />}
            {t}
          </div>
        );
      })}
    </div>
  );
}

const Chrome = ({ badge }: { badge: React.ReactNode }) => (
  <g stroke="none" transform="translate(2 0)">
    <circle cx="-2" cy="-2" r="17" fill="#1da45e" />
    <path d="M-2 -2L-16.7 -10.5A17 17 0 0 1 12.7 -10.5Z" fill="#dd4b3e" />
    <path d="M-2 -2L12.7 -10.5A17 17 0 0 1 -2 15Z" fill="#ffcd42" />
    <circle cx="-2" cy="-2" r="8" fill="#fff" />
    <circle cx="-2" cy="-2" r="6.3" fill="#4688f1" />
    {badge}
  </g>
);

const APPS: { u?: boolean; hot?: boolean; icon: React.ReactNode }[] = [
  { u: true, icon: <g><path d="M-16 -13H-5L-2 -9V0H-16Z" fill="#e5a200" /><path d="M-16 -9H16V13H-16Z" fill="#ffd75e" /><path d="M-10 14V2H10V14H5V7H-5V14Z" fill="#3a96dd" /></g> },
  { icon: <g><path d="M-6 -8V-12Q-6 -17 0 -17Q6 -17 6 -12V-8" fill="none" stroke="#ddd" strokeWidth="2.4" /><rect x="-17" y="-9" width="34" height="25" fill="#fff" /><path d="M-7 -4H-1V3H-7Z" fill="#f25022" /><path d="M1 -4H7V3H1Z" fill="#7fba00" /><path d="M-7 4H-1V11H-7Z" fill="#00a4ef" /><path d="M1 4H7V11H1Z" fill="#ffb900" /></g> },
  { icon: <g><path d="M-9 -16H4V0H-9Z" fill="#21a366" /><path d="M4 -16H17V-8H4Z" fill="#33c481" /><path d="M4 -8H17V0H4Z" fill="#21a366" /><path d="M-9 0H4V16H-9Z" fill="#185c37" /><path d="M4 0H17V8H4Z" fill="#107c41" /><path d="M4 8H17V16H4Z" fill="#185c37" /><rect x="-18" y="-9" width="18" height="18" rx="1.5" fill="#107c41" /><text x="-9" y="6" textAnchor="middle" fontSize="16" fontWeight="700" fill="#fff">X</text></g> },
  { icon: <g><path d="M-9 -16H15V6H-9Z" fill="#28a8ea" /><path d="M3 -16H15V-6H3Z" fill="#50d9ff" /><path d="M-9 4L18 2V16H-9Z" fill="#0a5ab4" /><path d="M-1 5H19V18H-1Z" fill="#e8b06c" /><path d="M-1 5L9 13L19 5" fill="none" stroke="#fff" strokeWidth="2" /><rect x="-18" y="-9" width="18" height="18" rx="1.5" fill="#0f6cbd" /><text x="-9" y="6" textAnchor="middle" fontSize="16" fontWeight="700" fill="#fff">O</text></g> },
  { u: true, icon: <Chrome badge={<g><circle cx="8" cy="8" r="12" fill="#8f7a62" /><path d="M-1 14Q-2 -2 8 -3Q18 -2 17 14L13 18H3Z" fill="#dcb87c" /><ellipse cx="8" cy="6" rx="4.8" ry="6.5" fill="#f2caa8" /><path d="M2 19Q8 11 14 18Q8 21 2 19Z" fill="#e8ddd4" /></g>} /> },
  { icon: <g><rect x="-9" y="-16" width="27" height="32" fill="#ca64ea" /><path d="M10 -8H18V0H10Z" fill="#ae4bd5" /><path d="M10 0H18V8H10Z" fill="#9332bf" /><path d="M10 8H18V16H10Z" fill="#7719aa" /><rect x="-17" y="-9" width="18" height="18" rx="1.5" fill="#7719aa" /><text x="-8" y="6" textAnchor="middle" fontSize="16" fontWeight="700" fill="#fff">N</text></g> },
  { icon: <g><circle cx="1" cy="-11" r="6" fill="#7b83eb" /><circle cx="11" cy="-9" r="4" fill="#5059c9" /><path d="M6 -4H17V6Q16 12 10 12Z" fill="#5059c9" /><path d="M-6 -4H12V6Q11 16 2 16Q-6 15 -6 6Z" fill="#7b83eb" /><rect x="-18" y="-9" width="18" height="18" rx="1.5" fill="#4b53bc" /><text x="-9" y="6" textAnchor="middle" fontSize="16" fontWeight="700" fill="#fff">T</text><circle cx="11" cy="11" r="7.5" fill="#7fba00" stroke="#fff" /><path d="M7 11L10 14L15 8" fill="none" stroke="#fff" strokeWidth="2" /></g> },
  { u: true, icon: <g><rect x="-16" y="-16" width="32" height="31" fill="#2a1200" stroke="#ff7c00" strokeWidth="2.4" /><text y="6" textAnchor="middle" fontSize="20" fontWeight="600" fill="#ff7c00">Ai</text></g> },
  { u: true, icon: <g><rect x="-16" y="-16" width="32" height="31" rx="3" fill="#051e26" stroke="#31c5f0" strokeWidth="2.4" /><text y="6" textAnchor="middle" fontSize="19" fontWeight="600" fill="#e8faff">Ps</text></g> },
  { u: true, icon: <Chrome badge={<g><circle cx="8" cy="8" r="12" fill="#455a64" /><text x="8" y="13" textAnchor="middle" fontSize="14" fill="#ddd">P</text></g>} /> },
  { u: true, hot: true, icon: <g transform="translate(-18 -18)"><Rhino w={36} h={36} /></g> },
  { u: true, icon: <g><rect x="-18" y="-16" width="36" height="32" fill="url(#film)" /><path d="M-15 -10H15V13H-15Z" fill="#333" /><path d="M-13 -16L-9 -11M-5 -16L-1 -11M3 -16L7 -11M11 -16L15 -11" stroke="#7a3048" strokeWidth="3" /><path d="M-4 -6L7 1L-4 8Z" fill="#fff" /></g> },
];

function Taskbar() {
  return (
    <div className="flex h-[60px] shrink-0 items-stretch bg-linear-to-r from-[#103d59] via-[#0c3556] to-[#082c55] text-white">
      <div className="flex w-[72px] items-center justify-center">
        <svg width="24" height="24" viewBox="0 0 24 24" fill="#fff"><path d="M0 3.3L10 2V11.4H0ZM11.2 1.8L24 0V11.4H11.2ZM0 12.6H10V22L0 20.7ZM11.2 12.6H24V24L11.2 22.2Z" /></svg>
      </div>
      <div className="flex w-[516px] items-center border-2 border-[#56738a] bg-[#335367] pl-[15px]">
        <svg width="28" height="28" viewBox="0 0 28 28" fill="none" stroke="#fff" strokeWidth="1.8"><circle cx="17" cy="10" r="8.2" /><path d="M11 16L2 25" /></svg>
        <span className="ml-[15px] text-[21.5px] leading-none tracking-[0.1px] text-[#d5dde2]">Type here to search</span>
      </div>
      <div className="flex w-[72px] items-center justify-center"><svg width="26" height="26" viewBox="0 0 26 26"><circle cx="13" cy="13" r="10.5" fill="none" stroke="#fff" strokeWidth="2.6" /></svg></div>
      <div className="flex w-[75px] items-center justify-center">
        <svg className="-ml-[3px]" width="26" height="26" viewBox="0 0 26 26" fill="none" stroke="#fff" strokeWidth="1.5"><path d="M2 1V4H17V1M2 8H17V18H2ZM2 25V22H17V25M22.5 1V8M22.5 12V25" /><path d="M21 8H24V11H21Z" fill="#fff" /></svg>
      </div>
      {APPS.map((a, i) => (
        <div key={i} className={`flex w-[75px] flex-col items-center justify-between ${a.hot ? "bg-[#07599b]" : ""}`}>
          <svg className="mt-[8px] font-['Open_Sans',sans-serif]" width="44" height="44" viewBox="-22 -22 44 44">{a.icon}</svg>
          <div className={`h-[3px] ${a.u ? "bg-[#8ec2ee]" : ""} ${a.hot ? "w-full" : "w-[61px]"}`} />
        </div>
      ))}
      <div className="ml-auto flex items-center">
        <svg width="340" height="40" viewBox="1970 1614 340 40" fill="none" stroke="#fff" strokeWidth="1.5">
          <path d="M1980 1638L1989 1629L1998 1638" />
          <g stroke="none"><path d="M2030 1642Q2023 1641 2024 1635Q2026 1631 2030 1632Q2035 1624 2041 1630Q2047 1633 2044 1642Z" fill="#1a8ae0" /><circle cx="2041" cy="1639" r="6.8" fill="#d9202e" /></g>
          <path d="M2038 1636L2044 1642M2044 1636L2038 1642" />
          <path d="M2096 1634V1622L2073 1625V1642L2086 1643M2079 1632Q2083 1627 2088 1631M2088 1635Q2084 1639 2079 1636" />
          <circle cx="2090" cy="1640" r="5.6" fill="#ff9b0a" stroke="none" />
          <path d="M2130 1628H2142V1641H2125V1636M2144 1632V1637" /><path d="M2127 1630H2133V1639H2127Z" fill="#fff" stroke="none" /><path d="M2121 1628H2127V1632H2121ZM2122 1625V1628M2126 1625V1628M2124 1632V1641H2126" />
          <path d="M2173 1644Q2173 1628 2189 1626M2178 1644Q2178 1633 2189 1631M2183 1644Q2183 1638 2189 1636" /><circle cx="2188" cy="1642" r="1.8" fill="#fff" stroke="none" />
          <path d="M2218 1630H2221L2226 1625V1643L2221 1638H2218ZM2229 1631Q2231 1634 2229 1637M2232 1629Q2236 1634 2232 1639" /><path d="M2236 1626Q2241 1634 2236 1642" stroke="#7f95aa" />
          <path d="M2277 1640L2286 1625Q2289 1624 2289 1627L2281 1641L2277 1643ZM2277 1634Q2272 1635 2273 1640Q2276 1645 2281 1641M2286 1632Q2292 1630 2291 1635L2286 1635" />
        </svg>
        <div className="flex w-[108px] flex-col items-center text-[17px] leading-[28px]">
          <span>8:25 PM</span>
          <span>4/14/2020</span>
        </div>
        <svg className="ml-[17px] mr-[29px]" width="26" height="28" viewBox="0 0 26 28"><path d="M0 3H24V22H14L9 27V22H0Z" fill="#fff" /><path d="M5 8.5H19M5 12.5H19M5 16.5H13" stroke="#0a2f54" strokeWidth="1.6" /><path d="M20 14Q26 18 23 24Q19 28 14 24Q20 23 20 14Z" fill="#0a2f54" stroke="#fff" strokeWidth="1.3" /></svg>
        <div className="mr-[6px] h-[60px] w-px bg-[#7f95aa]" />
      </div>
    </div>
  );
}

export default function App() {
  return (
    <div className="relative flex h-[1664px] w-[2496px] flex-col overflow-hidden bg-[#ebecf0] font-['Open_Sans',sans-serif] text-black">
      <GradientDefs />
      <TitleBar />
      <MenuBar />
      <CommandArea />
      <ToolTabs />
      <div className="flex h-[48px] shrink-0 items-start gap-[0.04px] pl-[9px] pt-[2px]">
        {TOOLBAR.map((t, i) => <Cell key={i} flag={t.flag}>{t.icon}</Cell>)}
      </div>
      <div className="flex h-[1247px] shrink-0">
        <div className="flex w-[94px] shrink-0 flex-col pl-[1px] pt-[10px]">
          <div className="ml-[2px] h-[3px] w-[82px] border-y border-[#c3c9da]" />
          <div className="mt-[1px] grid w-[84px] grid-cols-2">
            {SIDE.map(([icon, flag], i) => <Cell key={i} flag={flag}>{icon}</Cell>)}
          </div>
        </div>
        <div className="grid shrink-0 grid-cols-[1005px_1005px] grid-rows-[617px_617px] gap-[6px] pt-[6px]">
          <Viewport name="Top" width={69}><TopView /></Viewport>
          <Viewport name="Perspective" active width={133}><PerspectiveView /></Viewport>
          <Viewport name="Front" width={82}><BlockView /></Viewport>
          <Viewport name="Right" width={82}><BlockView right /></Viewport>
        </div>
        <div className="w-[9px] shrink-0" />
        <PropertiesPanel />
      </div>
      <ViewTabs />
      <SnapBar />
      <StatusBar />
      <Taskbar />
    </div>
  );
}
